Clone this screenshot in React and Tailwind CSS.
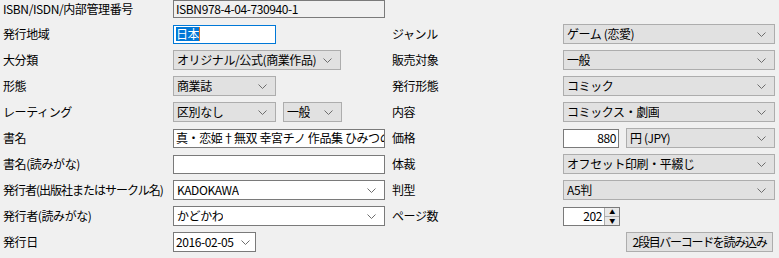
import React from "react";

const Chevron = () => (
  <svg width="9" height="5" viewBox="0 0 9 5" className="shrink-0">
    <path d="M0.5 0.5 L4.5 4.5 L8.5 0.5" fill="none" stroke="#6d6d6d" strokeWidth="1" />
  </svg>
);

const Combo = ({ value, w, white = false }) => (
  <div
    className={`flex h-[20px] items-center justify-between border pl-[3px] pr-[8px] ${
      white ? "border-[#7a7a7a] bg-white" : "border-[#adadad] bg-[#e1e1e1]"
    }`}
    style={{ width: w }}
  >
    <span className="overflow-hidden whitespace-nowrap leading-[16px]">{value}</span>
    <Chevron />
  </div>
);

const TextBox = ({ value, w, right = false }) => (
  <div
    className={`flex h-[19px] items-center overflow-hidden whitespace-nowrap border border-[#7a7a7a] bg-white px-[2px] leading-[16px] ${
      right ? "justify-end" : ""
    }`}
    style={{ width: w }}
  >
    {value}
  </div>
);

const Label = ({ children, w = 173 }) => (
  <div className="shrink-0 whitespace-nowrap pl-[3px] leading-[16px]" style={{ width: w }}>
    {children}
  </div>
);

const Row = ({ left, leftCtl, right, rightCtl }) => (
  <div className="flex h-[20px] items-center">
    <Label>{left}</Label>
    <div className="flex w-[216px] shrink-0 items-center gap-[7px]">{leftCtl}</div>
    <Label w={174}>{right}</Label>
    <div className="flex items-center gap-[7px]">{rightCtl}</div>
  </div>
);

export default function App() {
  return (
    <div
      className="h-[258px] w-[779px] overflow-hidden bg-[#f0f0f0] text-[12px] tracking-[-0.4px] text-black"
      style={{ fontFamily: '"Noto Sans CJK JP", "Liberation Sans", sans-serif' }}
    >
      <div className="flex h-[18px] items-center">
        <Label>ISBN/ISDN/内部管理番号</Label>
        <div className="flex h-[18px] w-[212px] items-center border border-[#7a7a7a] bg-[#f0f0f0] px-[2px] leading-[16px]">
          ISBN978-4-04-730940-1
        </div>
      </div>

      <div className="mt-[6px] flex flex-col gap-[6px]">
        <Row
          left="発行地域"
          leftCtl={
            <div className="flex h-[19px] w-[103px] items-center border border-[#0078d7] bg-white px-[2px]">
              <span className="bg-[#0078d7] leading-[14px] text-white">日本</span>
              <span className="h-[14px] w-[1px] bg-[#e07020]" />
            </div>
          }
          right="ジャンル"
          rightCtl={<Combo value="ゲーム (恋愛)" w={212} />}
        />
        <Row
          left="大分類"
          leftCtl={<Combo value="オリジナル/公式(商業作品)" w={168} />}
          right="販売対象"
          rightCtl={<Combo value="一般" w={212} />}
        />
        <Row
          left="形態"
          leftCtl={<Combo value="商業誌" w={103} />}
          right="発行形態"
          rightCtl={<Combo value="コミック" w={212} />}
        />
        <Row
          left="レーティング"
          leftCtl={
            <>
              <Combo value="区別なし" w={103} />
              <Combo value="一般" w={59} />
            </>
          }
          right="内容"
          rightCtl={<Combo value="コミックス・劇画" w={212} />}
        />
        <Row
          left="書名"
          leftCtl={<TextBox value="真・恋姫†無双 幸宮チノ 作品集 ひみつの華" w={212} />}
          right="価格"
          rightCtl={
            <>
              <TextBox value="880" w={56} right />
              <Combo value="円 (JPY)" w={149} />
            </>
          }
        />
        <Row
          left="書名(読みがな)"
          leftCtl={<TextBox value="" w={212} />}
          right="体裁"
          rightCtl={<Combo value="オフセット印刷・平綴じ" w={212} />}
        />
        <Row
          left={<span className="tracking-[-1px]">発行者(出版社またはサークル名)</span>}
          leftCtl={<Combo value="KADOKAWA" w={212} white />}
          right="判型"
          rightCtl={<Combo value="A5判" w={212} />}
        />
        <Row
          left="発行者(読みがな)"
          leftCtl={<Combo value="かどかわ" w={212} white />}
          right="ページ数"
          rightCtl={
            <div className="flex h-[19px] w-[57px] items-center border border-[#7a7a7a] bg-white">
              <span className="flex-1 pr-[2px] text-right leading-[16px]">202</span>
              <div className="flex h-full w-[15px] flex-col border-l border-[#adadad]">
                <div className="flex flex-1 items-center justify-center bg-[#e8e8e8] text-[6px] leading-none">▲</div>
                <div className="flex flex-1 items-center justify-center border-t border-[#adadad] bg-[#e8e8e8] text-[6px] leading-none">▼</div>
              </div>
            </div>
          }
        />
        <Row
          left="発行日"
          leftCtl={
            <div className="flex h-[20px] w-[83px] items-center justify-between border border-[#7a7a7a] bg-white pl-[2px] pr-[5px]">
              <span className="leading-[16px]">2016-02-05</span>
              <Chevron />
            </div>
          }
          right=""
          rightCtl={
            <div className="ml-[63px] flex h-[20px] w-[147px] items-center justify-center whitespace-nowrap border border-[#adadad] bg-[#e1e1e1] leading-[16px] tracking-[-1.3px]">
              2段目バーコードを読み込み
            </div>
          }
        />
      </div>
    </div>
  );
}
